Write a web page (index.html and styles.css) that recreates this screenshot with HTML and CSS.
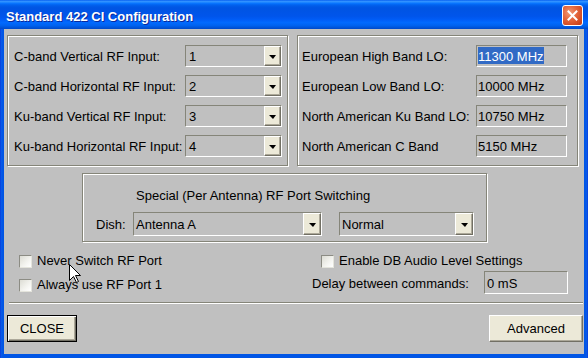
FILE: index.html
```html
<!DOCTYPE html>
<html>
<head>
<meta charset="utf-8">
<title>Standard 422 CI Configuration</title>
<link rel="stylesheet" href="styles.css">
</head>
<body>
<div class="window">
  <div class="titlebar">
    <span class="title">Standard 422 CI Configuration</span>
    <span class="close-x"><svg width="13" height="13" viewBox="0 0 13 13"><path d="M2.5 2.5 L10.5 10.5 M10.5 2.5 L2.5 10.5" stroke="#fff" stroke-width="2" stroke-linecap="square"/></svg></span>
  </div>
  <div class="client">
    <div class="top-row">
      <div class="panel panel-left">
        <div class="row"><span class="label">C-band Vertical RF Input:</span><div class="combo combo-sm"><span class="val">1</span><span class="drop"></span></div></div>
        <div class="row"><span class="label">C-band Horizontal RF Input:</span><div class="combo combo-sm"><span class="val">2</span><span class="drop"></span></div></div>
        <div class="row"><span class="label">Ku-band Vertical RF Input:</span><div class="combo combo-sm"><span class="val">3</span><span class="drop"></span></div></div>
        <div class="row"><span class="label">Ku-band Horizontal RF Input:</span><div class="combo combo-sm"><span class="val">4</span><span class="drop"></span></div></div>
      </div>
      <div class="panel panel-right">
        <div class="row"><span class="label">European High Band LO:</span><div class="textbox tb-lo"><span class="tval sel">11300 MHz</span></div></div>
        <div class="row"><span class="label">European Low Band LO:</span><div class="textbox tb-lo"><span class="tval">10000 MHz</span></div></div>
        <div class="row"><span class="label">North American Ku Band LO:</span><div class="textbox tb-lo"><span class="tval">10750 MHz</span></div></div>
        <div class="row"><span class="label">North American C Band</span><div class="textbox tb-lo"><span class="tval">5150 MHz</span></div></div>
      </div>
    </div>
    <div class="panel panel-mid">
      <div class="mid-title">Special (Per Antenna) RF Port Switching</div>
      <div class="mid-row">
        <span class="dish">Dish:</span>
        <div class="combo combo-lg combo-dish"><span class="val">Antenna A</span><span class="drop"></span></div>
        <div class="combo combo-lg combo-mode"><span class="val">Normal</span><span class="drop"></span></div>
      </div>
    </div>
    <div class="options">
      <div class="opt-col opt-left">
        <div class="check"><span class="box"></span><span>Never Switch RF Port</span></div>
        <div class="check"><span class="box"></span><span>Always use RF Port 1</span></div>
      </div>
      <div class="opt-col opt-right">
        <div class="check check-db"><span class="box"></span><span>Enable DB Audio Level Settings</span></div>
        <div class="delay"><span class="delay-label">Delay between commands:</span><div class="textbox tb-delay"><span class="tval">0 mS</span></div></div>
      </div>
    </div>
    <div class="separator"></div>
    <div class="buttons">
      <button class="btn btn-default">CLOSE</button>
      <button class="btn btn-adv">Advanced</button>
    </div>
  </div>
  <svg class="cursor" width="13" height="20" viewBox="0 0 13 20"><path d="M0.5 0.5 V16.5 L4.5 12.5 L7.5 18.5 L9.5 17.5 L6.5 11.5 H11.5 Z" fill="#fff" stroke="#000" stroke-width="1" stroke-linejoin="miter"/></svg>
</div>
</body>
</html>
```
FILE: styles.css
```css
* { box-sizing: border-box; }
html, body { margin: 0; padding: 0; }
body {
  width: 588px;
  height: 358px;
  overflow: hidden;
  font-family: "Liberation Sans", Arial, sans-serif;
  font-size: 13px;
  color: #000;
  background: #c0c0c0;
}
.window {
  position: relative;
  width: 588px;
  height: 358px;
  display: flex;
  flex-direction: column;
  background: linear-gradient(to right, #0831d9 0, #0a5ae8 1px, #0055e5 3px, #0055e5 585px, #0a5ae8 587px, #0831d9 588px);
}
.titlebar {
  flex: none;
  height: 29px;
  display: flex;
  align-items: center;
  justify-content: space-between;
  background: linear-gradient(to bottom, #0058ee 0%, #3593ff 4%, #288eff 7%, #127dff 10%, #036ffc 13%, #0262ee 17%, #0057e5 24%, #0054e3 30%, #0055eb 56%, #005bf5 66%, #026afe 78%, #0062ef 88%, #0052d6 96%, #0048c8 100%);
}
.title {
  color: #fff;
  font-weight: bold;
  font-size: 13px;
  padding: 3px 0 0 6px;
  text-shadow: 1px 1px 0 #0a2a9a;
}
.close-x {
  width: 21px;
  height: 21px;
  margin: 1px 5px 0 0;
  border: 1px solid #fff;
  border-radius: 3px;
  display: flex;
  align-items: center;
  justify-content: center;
  background: radial-gradient(circle at 35% 35%, #f09a78 0%, #e5683f 40%, #d24a22 75%, #c03a18 100%);
}
.client {
  flex: 1;
  margin: 0 4px 4px 4px;
  background: #c0c0c0;
  display: flex;
  flex-direction: column;
}
.top-row {
  display: flex;
  gap: 9px;
  margin: 6px 0 0 3px;
}
.panel {
  border: 1px solid #858579;
  box-shadow: inset 1px 1px 0 #fff, 1px 1px 0 #fff;
}
.panel-left, .panel-right {
  width: 281px;
  display: flex;
  flex-direction: column;
  gap: 8px;
  padding-top: 9px;
  padding-bottom: 8px;
}
.panel-left { padding-left: 6px; }
.panel-right { padding-left: 4px; }
.row {
  display: flex;
  height: 22px;
}
.label {
  padding-top: 2px;
  line-height: 20px;
  white-space: nowrap;
}
.panel-left .label { width: 171px; }
.panel-right .label { width: 174px; }

.combo {
  position: relative;
  display: flex;
  justify-content: space-between;
  border: 1px solid;
  border-color: #858579 #fff #fff #858579;
  background: #c0c0c0;
}
.combo-sm { width: 97px; height: 22px; }
.combo .val {
  padding-left: 3px;
  padding-top: 2px;
  line-height: 18px;
  white-space: nowrap;
}
.drop {
  width: 17px;
  height: 100%;
  background: #ece9d8;
  border: 1px solid;
  border-color: #fff #716f64 #716f64 #fff;
  box-shadow: inset -1px -1px 0 #aca899;
  display: flex;
  align-items: center;
  justify-content: center;
}
.drop::after {
  content: "";
  width: 0;
  height: 0;
  border-left: 4px solid transparent;
  border-right: 3px solid transparent;
  border-top: 4px solid #000;
  margin-top: 1px;
}
.textbox {
  border: 1px solid;
  border-color: #858579 #fff #fff #858579;
  background: #c0c0c0;
  padding: 1px 0 0 1px;
}
.tb-lo { width: 91px; height: 22px; }
.tval {
  display: inline-block;
  height: 17px;
  padding-top: 3px;
  line-height: 14px;
  white-space: nowrap;
}
.sel {
  background: #316ac5;
  color: #fff;
}

.panel-mid {
  width: 405px;
  height: 69px;
  margin: 7px 0 0 78px;
  padding: 14px 0 0 13px;
}
.mid-title {
  line-height: 16px;
  padding-left: 40px;
}
.mid-row {
  display: flex;
  margin-top: 8px;
}
.dish {
  width: 37px;
  padding-top: 2px;
  line-height: 22px;
}
.combo-lg { height: 24px; }
.combo-lg .val {
  padding-left: 2px;
  padding-top: 2px;
  line-height: 20px;
}
.combo-lg .drop { width: 18px; }
.combo-dish { width: 189px; }
.combo-mode { width: 135px; margin-left: 17px; }

.options {
  display: grid;
  grid-template-columns: 293px auto;
  margin-top: 11px;
  padding-left: 15px;
}
.opt-col {
  display: flex;
  flex-direction: column;
}
.opt-left { gap: 8px; }
.opt-right { gap: 2px; }
.check {
  display: flex;
  align-items: center;
  height: 16px;
  line-height: 16px;
  white-space: nowrap;
}
.check-db { padding-left: 9px; }
.box {
  width: 13px;
  height: 13px;
  margin-right: 5px;
  border: 1px solid;
  border-color: #8c8c84 #e4e4dc #e4e4dc #8c8c84;
  background: linear-gradient(135deg, #dcdcd4 0%, #f4f4f0 60%, #ffffff 100%);
}
.delay {
  display: flex;
  height: 23px;
}
.delay-label {
  width: 172px;
  padding-top: 2px;
  line-height: 21px;
  white-space: nowrap;
}
.tb-delay {
  width: 84px;
  height: 23px;
  padding: 1px 0 0 2px;
}
.tb-delay .tval {
  height: 21px;
  padding-top: 1px;
  line-height: 20px;
}
.separator {
  height: 2px;
  margin: 8px 1px 0 5px;
  border-top: 1px solid #858579;
  border-bottom: 1px solid #fff;
}
.buttons {
  display: flex;
  justify-content: space-between;
  margin: 11px 1px 0 3px;
}
.btn {
  font: inherit;
  color: #000;
  height: 27px;
  padding: 0;
  margin: 0;
  background: #ece9d8;
  line-height: 23px;
  text-align: center;
}
.btn-default {
  width: 70px;
  border: 1px solid #000;
  box-shadow: inset 1px 1px 0 #fff, inset -1px -1px 0 #716f64, inset -2px -2px 0 #aca899;
}
.btn-adv {
  width: 94px;
  border: 1px solid;
  border-color: #fff #716f64 #716f64 #fff;
  box-shadow: inset -1px -1px 0 #aca899;
}
.cursor {
  position: absolute;
  left: 69px;
  top: 264px;
}
```
